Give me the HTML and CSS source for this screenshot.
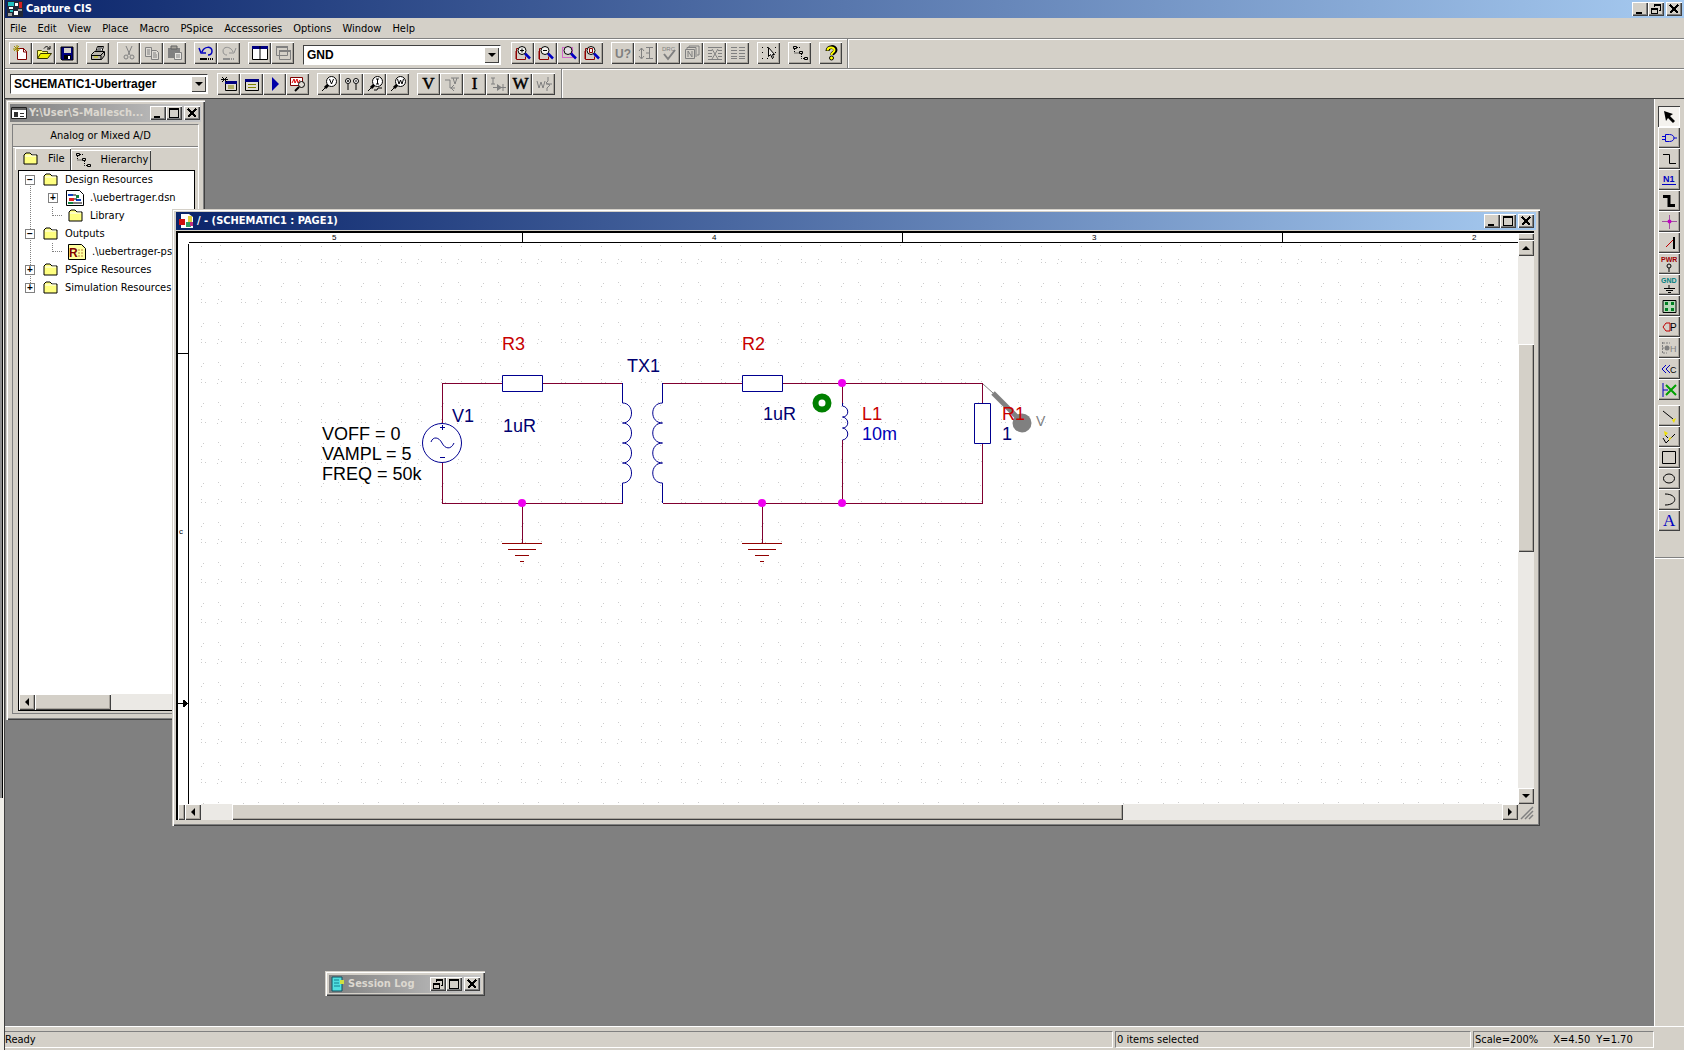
FILE: index.html
```html
<!DOCTYPE html>
<html lang="en">
<head>
<meta charset="utf-8">
<title>Capture CIS</title>
<link rel="stylesheet" href="styles.css">
</head>
<body>
<svg class="defs" aria-hidden="true">
  <symbol id="min" viewBox="0 0 12 10"><path d="M2 8h6v2H2z"/></symbol>
  <symbol id="max" viewBox="0 0 12 10"><path d="M1 0h10v10H1zM2 2v7h8V2z" fill-rule="evenodd"/></symbol>
  <symbol id="restore" viewBox="0 0 12 10"><path d="M4 0h7v7H9V6h1V2H5v1H4zM1 4h7v6H1zM2 6v3h5V6z" fill-rule="evenodd"/></symbol>
  <symbol id="close" viewBox="0 0 12 10"><path d="M2 1l8 8M10 1L2 9" stroke="#000" stroke-width="2" fill="none"/></symbol>
  <symbol id="folder" viewBox="0 0 16 14"><path d="M1 12V3l2-2h4l2 2h5v9z" fill="#ffff80" stroke="#000"/><path d="M2 4h11" stroke="#fff"/></symbol>
  <symbol id="hier" viewBox="0 0 16 16"><path d="M1.500 1.500h3v2h-3zM7.500 6.500h3v2h-3zM12.500 12.500h3v2h-3z" fill="none" stroke="#000"/><path d="M2.500 4v4H7M9.500 9v4.500H12M5 2.500h3" fill="none" stroke="#000" stroke-dasharray="1 1"/></symbol>
  <symbol id="zoompage" viewBox="0 0 16 16"><path d="M4.500 3.500h-3v11h9v-3" fill="none" stroke="#900000"/><path d="M1 6v8" stroke="#900000"/><circle cx="7" cy="5.500" r="4" fill="#f4f4f0" stroke="#000"/><path d="M10 8.500l5 5" stroke="#0000c0" stroke-width="2.500"/></symbol>
  <symbol id="probe" viewBox="0 0 16 16"><circle cx="10.500" cy="5.500" r="5" fill="#fff" stroke="#000"/><path d="M7 9l-3 3" stroke="#000" stroke-width="3"/><path d="M4 12l-3 3" stroke="#000"/></symbol>
</svg>

<div class="app">
  <aside class="edge"><i></i></aside>
  <div class="main">
    <header class="titlebar app-title">
      <svg class="ico" viewBox="0 0 16 16"><path d="M0 0h16v16H0z" fill="#202838"/><path d="M1 1h6v4H1zM3 9h3v2H3z" fill="#20c0c0"/><path d="M8 2h3v3H8zM2 6h4v2H2zM7 10h4v4H7z" fill="#fff"/><path d="M12 1h3v6h-3z" fill="#d02020"/><path d="M1 12h4v3H1zM11 8h4v2h-4z" fill="#a0a0a0"/></svg>
      <h1>Capture CIS</h1>
      <span class="winbtns"><button aria-label="Minimize"><svg><use href="#min"/></svg></button><button aria-label="Restore"><svg><use href="#restore"/></svg></button><button class="x" aria-label="Close"><svg><use href="#close"/></svg></button></span>
    </header>
    <nav class="menu"><button>File</button><button>Edit</button><button>View</button><button>Place</button><button>Macro</button><button>PSpice</button><button>Accessories</button><button>Options</button><button>Window</button><button>Help</button></nav>

    <div class="toolbar first">
      <div class="band">
        <div class="group">
          <button aria-label="New"><svg viewBox="0 0 16 16"><path d="M4.500 3.500h6l3 3v8h-9z" fill="#fff" stroke="#800000"/><path d="M10.500 3v4H14" fill="none" stroke="#800000"/><path d="M1 1l5 5M6 1L1 6M0 4h7M4 0v7" stroke="#a09000"/></svg></button>
          <button aria-label="Open"><svg viewBox="0 0 16 16"><path d="M1.500 13V5.500h4l1 1h5V9" fill="#ffff60" stroke="#505000"/><path d="M1.500 13.500l3-5h11l-4 5z" fill="#f0f000" stroke="#303000"/><path d="M8 3.500c2-3 4-2 5 0M14 1v3h-3" fill="none" stroke="#000"/></svg></button>
          <button aria-label="Save"><svg viewBox="0 0 16 16"><path d="M2 2h12v13H3l-1-1z" fill="#000080" stroke="#000"/><path d="M5 3h7v5H5z" fill="#d4d0c8"/><path d="M5 10h7v4H5z" fill="#000"/><path d="M9 11h2v3H9z" fill="#fff"/></svg></button>
        </div>
        <div class="group">
          <button aria-label="Print"><svg viewBox="0 0 16 16"><path d="M5.500 7.500l2-6h6l-2 6z" fill="#fff" stroke="#000"/><path d="M8 3h4M7 5h4" stroke="#000"/><path d="M1.500 9.500l3-3h10v4l-3 4h-10z" fill="#b8b4ac" stroke="#000"/><path d="M2 10.500h9v4M11 10l3-3" fill="none" stroke="#000"/><path d="M4 12h4" stroke="#d0d000"/></svg></button>
        </div>
        <div class="group">
          <button aria-label="Cut" disabled><svg viewBox="0 0 16 16"><path d="M5 1l4 9M11 1L7 10" stroke="#808080" fill="none"/><circle cx="5" cy="12" r="2" fill="none" stroke="#808080"/><circle cx="11" cy="12" r="2" fill="none" stroke="#808080"/></svg></button>
          <button aria-label="Copy" disabled><svg viewBox="0 0 16 16"><path d="M1.500 2.500h6v9h-6zM7.500 5.500h5l2 2v7h-7z" fill="#dedbd5" stroke="#808080"/><path d="M3 5h3M3 7h3M3 9h3M9 8h3M9 10h4M9 12h4" stroke="#808080"/></svg></button>
          <button aria-label="Paste" disabled><svg viewBox="0 0 16 16"><path d="M1 3h12v10H1z" fill="#808080"/><path d="M4 1h6v3H4z" fill="#a8a49c" stroke="#606060"/><path d="M7.500 7.500h7v7h-7z" fill="#e8e6e2" stroke="#808080"/><path d="M9 10h4M9 12h4" stroke="#808080"/></svg></button>
        </div>
        <div class="group">
          <button aria-label="Undo"><svg viewBox="0 0 16 16"><path d="M4 7C6 1 14 1 14 6c0 3-2 4-4 4M1 3l2 5h5" fill="none" stroke="#0000c0" stroke-width="1.500"/><path d="M2 13h7v2H2zM10 13h1v2h-1zM12 13h1v2h-1zM14 13h1v2h-1z"/></svg></button>
          <button aria-label="Redo" disabled><svg viewBox="0 0 16 16"><path d="M12 7C10 1 2 1 2 6c0 3 2 4 4 4M15 3l-2 5H8" fill="none" stroke="#909090"/><path d="M2 13h7v2H2zM10 13h1v2h-1zM12 13h1v2h-1z" fill="#909090"/></svg></button>
        </div>
        <div class="group">
          <button aria-label="Tile"><svg viewBox="0 0 16 16"><path d="M.5 1.500h15v13H.5z" fill="#fff" stroke="#000"/><path d="M0 1h16v3H0z" fill="#000080"/><path d="M8 1v14" stroke="#000"/></svg></button>
          <button aria-label="Cascade" disabled><svg viewBox="0 0 16 16"><path d="M1.500 1.500h11v9h-11zM4.500 5.500h11v9h-11z" fill="#d4d0c8" stroke="#808080"/><path d="M1 1h12v2H1zM4 5h12v2H4z" fill="#808080"/></svg></button>
        </div>
        <label class="combo part"><select aria-label="Part"><option>GND</option></select><span></span></label>
        <div class="group">
          <button aria-label="Zoom in"><svg viewBox="0 0 16 16"><use href="#zoompage"/><path d="M5 5.500h4M7 3.500v4" stroke="#000"/></svg></button>
          <button aria-label="Zoom out"><svg viewBox="0 0 16 16"><use href="#zoompage"/><path d="M5 5.500h4" stroke="#000"/></svg></button>
          <button aria-label="Zoom area"><svg viewBox="0 0 16 16"><path d="M1.500 2.500h10v10h-10z" fill="none" stroke="#d000d0" stroke-dasharray="1 1"/><circle cx="7" cy="5.500" r="4" fill="#e4e0e4" stroke="#000"/><path d="M10 8.500l5 5" stroke="#0000c0" stroke-width="2.500"/></svg></button>
          <button aria-label="Zoom all"><svg viewBox="0 0 16 16"><use href="#zoompage"/><path d="M5.500 3.500h3v4h-3z" fill="none" stroke="#900000"/></svg></button>
        </div>
        <div class="group">
          <button aria-label="Annotate" disabled><svg viewBox="0 0 16 16"><text x="0" y="13" class="t-sans" font-size="12" font-weight="700" fill="#808080">U?</text></svg></button>
          <button aria-label="Back annotate" disabled><svg viewBox="0 0 16 16"><path d="M3.500 3v10M1 6l2.500-3L6 6M1 11l2.500 3L6 11M8 2.500h7M8 13.500h7M11.500 3v10M8 8h4" fill="none" stroke="#808080"/></svg></button>
          <button aria-label="Design rules check" disabled><svg viewBox="0 0 16 16"><text x="1" y="6" class="t-sans" font-size="6" fill="#808080">DRC</text><path d="M3 9l4 5 7-9" fill="none" stroke="#808080" stroke-width="2"/></svg></button>
          <button aria-label="Netlist" disabled><svg viewBox="0 0 16 16"><path d="M1.500 4.500h9v9h-9zM3 4V2.500h9V12M5 2V1h10v9h-2" fill="none" stroke="#808080"/><path d="M4 12V6l4 6V6" fill="none" stroke="#808080"/></svg></button>
          <button aria-label="Cross reference" disabled><svg viewBox="0 0 16 16"><path d="M1 2.500h14M1 5.500h4M11 5.500h4M1 8.500h4M11 8.500h4M1 11.500h4M11 11.500h4M1 14.500h14" stroke="#808080"/><path d="M5 4l6 10M11 4L5 14" stroke="#808080"/></svg></button>
          <button aria-label="Bill of materials" disabled><svg viewBox="0 0 16 16"><path d="M1 2.500h6M9 2.500h6M1 5.500h6M9 5.500h6M1 8.500h6M9 8.500h6M1 11.500h6M9 11.500h6M1 13.500h6M9 13.500h6" stroke="#808080"/></svg></button>
        </div>
        <div class="group">
          <button aria-label="Snap to grid"><svg viewBox="0 0 16 16"><path d="M1 2h1v1H1zM1 7h1v1H1zM1 13h1v1H1zM6 13h1v1H6zM11 13h1v1h-1zM14 2h1v1h-1zM14 7h1v1h-1zM6 2h1v1H6z"/><path d="M7.500 2.500v9l2-2 2 4 1-1-1-3h2z" fill="#e8e6e2" stroke="#000"/></svg></button>
        </div>
        <div class="group">
          <button aria-label="Project manager"><svg viewBox="0 0 16 16"><use href="#hier"/></svg></button>
        </div>
        <div class="group">
          <button aria-label="Help"><svg viewBox="0 0 16 16"><path d="M4.500 6c0-5 8-5 8-1 0 3-3 2-3.500 5" fill="none" stroke="#000" stroke-width="4"/><path d="M4.500 5.500c0-4 7-4 7-.5 0 3-3 2-3 5" fill="none" stroke="#ffff00" stroke-width="2"/><circle cx="8.500" cy="13" r="2" fill="#ffff00" stroke="#000"/></svg></button>
        </div>
      </div>
    </div>

    <div class="toolbar second">
      <div class="band">
        <label class="combo profile"><select aria-label="Simulation profile"><option>SCHEMATIC1-Ubertrager</option></select><span></span></label>
        <div class="group">
          <button aria-label="New simulation profile"><svg viewBox="0 0 16 16"><path d="M4.500 5.500h11v9h-11z" fill="#e0dcd4" stroke="#000"/><path d="M4 5h12v3H4z" fill="#000080"/><path d="M1 1l5 5M6 1L1 6M0 3.500h7" stroke="#000"/><path d="M7 10h6M7 12h6" stroke="#808000"/></svg></button>
          <button aria-label="Edit simulation profile"><svg viewBox="0 0 16 16"><path d="M1.500 3.500h13v11h-13z" fill="#e0dcd4" stroke="#000"/><path d="M1 3h14v3H1z" fill="#000080"/><path d="M4 8.500h8M4 11.500h8" stroke="#808000"/></svg></button>
          <button aria-label="Run PSpice"><svg viewBox="0 0 16 16"><path d="M5 1l7 7-7 7z" fill="#0000a8"/></svg></button>
          <button aria-label="View results"><svg viewBox="0 0 16 16"><path d="M.5 1.500h12v8H.5z" fill="#fff" stroke="#800000"/><path d="M2 7l2-4 1 4 2-4 1 4 2-3" fill="none" stroke="#e00000"/><circle cx="11.500" cy="8.500" r="3" fill="#e0dcd4" stroke="#000"/><path d="M9 11l-4 4" stroke="#000" stroke-width="2"/></svg></button>
        </div>
        <div class="group">
          <button aria-label="Voltage marker"><svg viewBox="0 0 16 16"><use href="#probe"/><path d="M8.500 3l2 5 2-5" fill="none" stroke="#000"/></svg></button>
          <button aria-label="Differential markers"><svg viewBox="0 0 16 16"><circle cx="4" cy="5" r="2.500" fill="#fff" stroke="#000"/><circle cx="12" cy="5" r="2.500" fill="#fff" stroke="#000"/><path d="M4 8v6M12 8v6M3 5h2M4 4v2M11 5h2" stroke="#000"/></svg></button>
          <button aria-label="Current marker"><svg viewBox="0 0 16 16"><use href="#probe"/><path d="M9 3h3M10.500 3v5M9 8h3M7 14h3l1-2h4" fill="none" stroke="#000"/></svg></button>
          <button aria-label="Power marker"><svg viewBox="0 0 16 16"><use href="#probe"/><path d="M7.500 3l1.500 5 1.500-4L12 8l1.500-5" fill="none" stroke="#000"/></svg></button>
        </div>
        <div class="group">
          <button class="letter">V</button>
          <button aria-label="Toggle voltage" disabled><svg viewBox="0 0 16 16"><path d="M1 4h5v8h5M10 9l-3 3 3 3M9 2l2 6 2-6M7 2h8" fill="none" stroke="#808080"/></svg></button>
          <button class="letter">I</button>
          <button aria-label="Toggle current" disabled><svg viewBox="0 0 16 16"><path d="M1 2h4M3 2v6M1 8h4M3 11.500h13M13 8v7" fill="none" stroke="#808080"/><path d="M7 8v7l5-3.500z" fill="#808080"/></svg></button>
          <button class="letter">W</button>
          <button aria-label="Toggle power" disabled><svg viewBox="0 0 16 16"><path d="M1 5l2 7 2-6 2 6 2-7M12 1v4l-2 2 4 2-3 3v3M10 8h6" fill="none" stroke="#808080"/></svg></button>
        </div>
      </div>
    </div>

    <div class="middle">
      <main class="desk">
        <section class="window project">
          <header class="titlebar inactive">
            <svg class="ico" viewBox="0 0 16 16"><path d="M.5 2.500h15v11H.5z" fill="#fff" stroke="#202020"/><path d="M1 3h14v2H1z" fill="#606060"/><path d="M3 7h4v5H3zM9 8h4v1H9zM9 11h4v1H9z" fill="#303030"/></svg>
            <h2>Y:\User\S-Mallesch...</h2>
            <span class="winbtns"><button aria-label="Minimize"><svg><use href="#min"/></svg></button><button aria-label="Maximize"><svg><use href="#max"/></svg></button><button class="x" aria-label="Close"><svg><use href="#close"/></svg></button></span>
          </header>
          <div class="project-body">
            <p class="kind">Analog or Mixed A/D</p>
            <div class="tabs"><button class="on"><svg class="fold"><use href="#folder"/></svg>File</button><button><svg class="ico"><use href="#hier"/></svg>Hierarchy</button></div>
            <div class="pane">
              <ul class="tree">
                <li><i class="pm">−</i><svg class="fold"><use href="#folder"/></svg>Design Resources</li>
                <li class="sub"><i class="pm plus">+</i><svg class="doc" viewBox="0 0 18 16"><path d="M.5.5h13l4 4v11H.5z" fill="#fff" stroke="#000"/><path d="M2 4h5v2H2zM10 9h5v2h-5z" fill="#1040c0"/><path d="M3 8h5v3H3z" fill="#e02020"/><path d="M10 5h3v3h-3zM2 12h5v2H2z" fill="#108040"/><path d="M7 5h3M8 9h3M7 13h9" stroke="#000"/></svg>.\uebertrager.dsn</li>
                <li class="sub"><i class="no"></i><svg class="fold"><use href="#folder"/></svg>Library</li>
                <li><i class="pm">−</i><svg class="fold"><use href="#folder"/></svg>Outputs</li>
                <li class="sub"><i class="no"></i><svg class="doc" viewBox="0 0 18 16"><path d="M.5.5h13l4 4v11H.5z" fill="#ffffa0" stroke="#000"/><text x="1" y="13" class="t-sans" font-weight="700" font-size="12" fill="#800000">R</text><path d="M10 6h5M10 9h5M10 12h5" stroke="#c08040" stroke-dasharray="2 1"/></svg>.\uebertrager-psp</li>
                <li><i class="pm">+</i><svg class="fold"><use href="#folder"/></svg>PSpice Resources</li>
                <li><i class="pm">+</i><svg class="fold"><use href="#folder"/></svg>Simulation Resources</li>
              </ul>
              <div class="hbar"><button class="arr l" aria-label="Scroll left"></button><span class="thumb"></span></div>
            </div>
          </div>
        </section>

        <section class="window schematic">
          <header class="titlebar">
            <svg class="ico" viewBox="0 0 16 16"><path d="M3 1h8l4 3v11H3z" fill="#fff"/><path d="M1 6h6v6H1z" fill="#d01010"/><path d="M10 3h4v6h-4z" fill="#e0d040"/><path d="M8 9h5v5H8z" fill="#30a060"/><path d="M12 9h3v4h-3z" fill="#c03080"/></svg>
            <h2>/ - (SCHEMATIC1 : PAGE1)</h2>
            <span class="winbtns"><button aria-label="Minimize"><svg><use href="#min"/></svg></button><button aria-label="Maximize"><svg><use href="#max"/></svg></button><button class="x" aria-label="Close"><svg><use href="#close"/></svg></button></span>
          </header>
          <div class="page">
            <svg class="drawing" role="img" aria-label="Transformer schematic">
              <defs><pattern id="grid" width="40" height="40" patternUnits="userSpaceOnUse" x="200" y="257">
                <path d="M1 2h1v1H1zM5 5h1v1H5zM1 5h1v1H1zM18 2h1v1h-1zM21 4h1v1h-1zM17 6h1v1h-1zM3 26h1v1H3zM1 29h1v1H1zM18 25h1v1h-1zM20 28h1v1h-1z" fill="#ccc"/></pattern></defs>
              <g transform="translate(-178 -233)">
                <rect x="190" y="244" width="1328" height="560" fill="url(#grid)"/>
                <g stroke="#000" fill="none" shape-rendering="crispEdges">
                  <path d="M189 242.500h1329M188.500 244v560M522.500 233v10M902.500 233v10M1282.500 233v10M178 353.500h10M178 703.500h6"/>
                  <path d="M183 700l5 3.500-5 3.500z" fill="#000"/>
                </g>
                <g class="ruler"><text x="332" y="240">5</text><text x="712" y="240">4</text><text x="1092" y="240">3</text><text x="1472" y="240">2</text><text x="179" y="534">c</text></g>
                <g class="wire">
                  <path d="M502 383.500h-59.500V423M542 383.500h80M442.500 463v40.500h180M742 383.500h-80M782 383.500h200.500V403M982.500 443v60.500h-320M842.500 383v20M842.500 440v63M522.500 503v40M762.500 503v40"/>
                </g>
                <g class="earth">
                  <path d="M502 543.500h40M508 549.500h28M515 555.500h14M520 561.500h4M742 543.500h40M748 549.500h28M755 555.500h14M760 561.500h4"/>
                </g>
                <g class="part">
                  <path d="M502.500 375.500h40v16h-40zM742.500 375.500h40v16h-40zM974.500 403.500h16v40h-16z" fill="#fff"/>
                  <path d="M622.500 383v20c12 0 12 20 0 20c12 0 12 20 0 20c12 0 12 20 0 20c12 0 12 20 0 20v20"/>
                  <path d="M662.500 383v20c-13 0-13 20 0 20c-13 0-13 20 0 20c-13 0-13 20 0 20c-13 0-13 20 0 20v20"/>
                  <path d="M842.500 403v3c7 1 7 11 0 11c7 1 7 11 0 11c7 1 7 11 0 12"/>
                  <circle cx="442" cy="443" r="19.500" fill="#fff"/>
                  <path d="M431 442c2-6 8-5 11 1s9 7 12 0M440 427.500h5M442.500 425v5M440 457.500h5"/>
                </g>
                <g fill="#f000f0"><circle cx="522" cy="503" r="4"/><circle cx="762" cy="503" r="4"/><circle cx="842" cy="503" r="4"/><circle cx="842" cy="383" r="4"/></g>
                <circle cx="822" cy="403" r="6.500" fill="#fff" stroke="#008000" stroke-width="6"/>
                <g class="lbl">
                  <text x="322" y="440">VOFF = 0</text><text x="322" y="460">VAMPL = 5</text><text x="322" y="480">FREQ = 50k</text>
                  <g class="navy"><text x="452" y="422">V1</text><text x="503" y="432">1uR</text><text x="627" y="372">TX1</text><text x="763" y="420">1uR</text><text x="1002" y="440">1</text></g>
                  <text x="862" y="440" class="blue">10m</text>
                  <g class="red"><text x="502" y="350">R3</text><text x="742" y="350">R2</text><text x="862" y="420">L1</text></g>
                </g>
                <g stroke="#808080" fill="none"><path d="M983 384l10 9"/><path d="M993 393l24 24" stroke-width="5"/></g>
                <circle cx="1022" cy="423" r="9.500" fill="#808080"/>
                <text x="1002" y="420" class="lbl red">R1</text>
                <text x="1036" y="426" class="lbl probe">V</text>
              </g>
            </svg>
            <div class="vbar"><i class="split"></i><button class="arr u" aria-label="Scroll up"></button><span class="thumb"></span><button class="arr d" aria-label="Scroll down"></button></div>
            <div class="hbar"><i class="split"></i><button class="arr l" aria-label="Scroll left"></button><span class="thumb"></span><button class="arr r" aria-label="Scroll right"></button></div>
            <svg class="grip" viewBox="0 0 16 16"><path d="M3 15L15 3M7 15l8-8M11 15l4-4" stroke="#808080" stroke-width="1.500"/></svg>
          </div>
        </section>

        <section class="window session">
          <header class="titlebar inactive">
            <svg class="ico" viewBox="0 0 16 16"><path d="M2 1h10v14H2z" fill="#50e0e0" stroke="#105060"/><path d="M4 4h5M4 7h5M4 10h6" stroke="#108090"/><path d="M10 4h4v4h-4z" fill="#d0e040"/></svg>
            <h2>Session Log</h2>
            <span class="winbtns"><button aria-label="Restore"><svg><use href="#restore"/></svg></button><button aria-label="Maximize"><svg><use href="#max"/></svg></button><button class="x" aria-label="Close"><svg><use href="#close"/></svg></button></span>
          </header>
        </section>
      </main>

      <aside class="palette">
        <div class="tools">
          <button class="on" aria-label="Select"><svg viewBox="0 0 16 16"><path d="M3 2l9 3-3 2 5 5-2 2-5-5-2 3z"/></svg></button>
          <button aria-label="Place part"><svg viewBox="0 0 16 16"><path d="M4.500 4.500h4c6 0 6 7 0 7h-4zM1 6.500h3M1 9.500h3M13 8h3" fill="none" stroke="#0000d0"/></svg></button>
          <button aria-label="Place wire"><svg viewBox="0 0 16 16"><path d="M2 3.500h6.500v9H15" fill="none" stroke="#000"/></svg></button>
          <button aria-label="Place net alias"><svg viewBox="0 0 16 16"><text x="2" y="10" class="t-sans" font-weight="700" font-size="9" fill="#0000c0">N1</text><path d="M1 12.500h14" stroke="#0000c0"/></svg></button>
          <button aria-label="Place bus"><svg viewBox="0 0 16 16"><path d="M2 3.500h6v9h6" fill="none" stroke="#000" stroke-width="3"/></svg></button>
          <button aria-label="Place junction"><svg viewBox="0 0 16 16"><path d="M8.500 1v14M1 7.500h15" stroke="#a050a0"/><circle cx="8.500" cy="7.500" r="2" fill="#c000c0"/></svg></button>
          <button aria-label="Place bus entry"><svg viewBox="0 0 16 16"><path d="M13 2v12" stroke="#000" stroke-width="2"/><path d="M5 12l7-7" stroke="#c00000"/></svg></button>
          <button aria-label="Place power"><svg viewBox="0 0 16 16"><text x="0" y="6" class="t-mono" fill="#a00000">PWR</text><circle cx="8" cy="10" r="2" fill="none" stroke="#000"/><path d="M8 12v4" stroke="#000"/></svg></button>
          <button aria-label="Place ground"><svg viewBox="0 0 16 16"><text x="0" y="6" class="t-mono" fill="#008080">GND</text><path d="M8 8v3M3 11.500h11M5 13.500h7M7 15.500h3" stroke="#000"/></svg></button>
          <button aria-label="Place hierarchical block"><svg viewBox="0 0 16 16"><path d="M2 2.500h13v12H2z" fill="#b8d8b8" stroke="#000"/><path d="M4 4h3v3H4zM10 4h3v3h-3zM4 10h3v3H4zM10 10h3v3h-3z" fill="#008020"/></svg></button>
          <button aria-label="Place port"><svg viewBox="0 0 16 16"><path d="M2 8l3-4h4v8H5z" fill="none" stroke="#c00000"/><text x="9" y="12" class="t-sans" font-size="10">P</text></svg></button>
          <button aria-label="Place pin" disabled><svg viewBox="0 0 16 16"><path d="M1.500 2v12M2 3h7M2 13h4M1 8h3" stroke="#808080" stroke-dasharray="2 1"/><circle cx="6" cy="8" r="2.500" fill="#808080"/><text x="9" y="12" class="t-sans" font-size="9" fill="#808080">H</text></svg></button>
          <button aria-label="Place off-page connector"><svg viewBox="0 0 16 16"><path d="M5 4L1 8l4 4M9 4L5 8l4 4" fill="none" stroke="#0000c0"/><text x="9" y="12" class="t-sans" font-size="9">C</text></svg></button>
          <button aria-label="Place no connect"><svg viewBox="0 0 16 16"><path d="M2 1v14M2 8h5" stroke="#0000c0"/><path d="M5 3l10 10M15 3L5 13" stroke="#00a000" stroke-width="2"/></svg></button>
        </div>
        <div class="tools">
          <button aria-label="Place line"><svg viewBox="0 0 16 16"><path d="M2 3l10 8" stroke="#000"/><path d="M11 12l4-2-2 5z" fill="#f0e000"/></svg></button>
          <button aria-label="Place polyline"><svg viewBox="0 0 16 16"><path d="M2 9l3 5 9-9M4 6l3 3" fill="none" stroke="#000"/><path d="M3 2l4 2-3 3zM8 9l3-1-3 4z" fill="#f0e000"/></svg></button>
          <button aria-label="Place rectangle"><svg viewBox="0 0 16 16"><path d="M1.500 1.500h13v12h-13z" fill="none" stroke="#000"/></svg></button>
          <button aria-label="Place ellipse"><svg viewBox="0 0 16 16"><ellipse cx="8" cy="7.500" rx="5.500" ry="4.500" fill="none" stroke="#000"/></svg></button>
          <button aria-label="Place arc"><svg viewBox="0 0 16 16"><path d="M4 2c13 0 13 11 0 11" fill="none" stroke="#000"/></svg></button>
          <button aria-label="Place text"><svg viewBox="0 0 16 16"><text x="2" y="13" class="t-serif" fill="#0000c0">A</text></svg></button>
        </div>
      </aside>
    </div>

    <footer class="status"><span class="s1">Ready</span><span class="s2">0 items selected</span><span class="s3"><b>Scale=200%</b><b>X=4.50</b><b>Y=1.70</b></span></footer>
  </div>
</div>
</body>
</html>
```
FILE: styles.css
```css
* { box-sizing: border-box; }
:root {
  --face: #d4d0c8;
  --dark: #808080;
  --ui: "DejaVu Sans Condensed", "Liberation Sans", sans-serif;
  --arial: "Liberation Sans", Arial, sans-serif;
}
body { margin: 0; background: var(--face); font: 11px/14px var(--ui); color: #000; }
button { font: inherit; color: inherit; margin: 0; padding: 0; border: 0; background: var(--face); }
h1, h2, p, ul { margin: 0; padding: 0; font-size: 11px; line-height: 14px; }
.defs { position: absolute; width: 0; height: 0; }
.ico { width: 16px; height: 16px; flex: none; }
.t-sans { font-family: var(--arial); }
.t-mono { font: 700 7px var(--arial); }
.t-serif { font: 17px "Liberation Serif", serif; }

.app { display: flex; height: 100vh; }
.edge { width: 5px; background: #f0eee8; border-right: 1px solid #404040; flex: none; }
.edge i { display: block; height: 76%; width: 3px; background: #909090; border-right: 1px solid #000; }
.main { flex: 1; min-width: 0; display: flex; flex-direction: column; }

/* Title bars */
.titlebar { display: flex; align-items: center; gap: 3px; height: 18px; flex: none; padding: 0 2px; color: #fff; background: linear-gradient(90deg, #0a246a, #a6caf0); }
.titlebar h1, .titlebar h2 { flex: 1; min-width: 0; white-space: nowrap; }
.titlebar.inactive { background: linear-gradient(90deg, #808080, #c8c8c8); color: #dcd8d0; gap: 2px; padding: 0 1px; }
.winbtns { display: flex; }
.winbtns button { width: 16px; height: 14px; display: grid; place-items: center; box-shadow: inset 1px 1px #fff, inset -1px -1px #404040, inset -2px -2px var(--dark); }
.winbtns svg { width: 12px; height: 10px; shape-rendering: crispEdges; }
.winbtns .x { margin-left: 2px; }

/* Menu and toolbars */
.menu { display: flex; gap: 1px; height: 20px; padding-top: 1px; flex: none; }
.menu button { padding: 0 5px; }
.toolbar { display: flex; height: 30px; flex: none; border-top: 1px solid var(--dark); box-shadow: inset 0 1px #fff; }
.second { border-bottom: 1px solid #404040; height: 31px; }
.band { display: flex; align-items: center; gap: 8px; padding: 1px 6px 0 5px; border-right: 1px solid var(--dark); box-shadow: 1px 0 #fff; }
.first .band { padding: 0 5px 1px 4px; }
.group { display: flex; }
.group button, .tools button { width: 23px; height: 22px; display: grid; place-items: center; box-shadow: inset 1px 1px #fff, inset -1px -1px #404040, inset -2px -2px #a8a49c; }
.group svg, .tools svg { width: 16px; height: 16px; }
.group .letter { font: 17px/20px "Liberation Serif", serif; -webkit-text-stroke: 0.5px #000; }
.combo { position: relative; display: flex; height: 20px; margin: 0 1px; }
.part.combo { margin: 4px 2px 0 1px; }
.part { width: 198px; }
.profile { width: 198px; margin-left: 0; }
.combo select { appearance: none; width: 100%; border: 1px solid var(--dark); border-color: #404040 #fff #fff #404040; border-radius: 0; background: #fff; padding: 0 20px 0 3px; font: 700 12px/16px var(--arial); color: #000; }
.combo span { position: absolute; right: 2px; top: 2px; width: 15px; height: 16px; background: var(--face); box-shadow: inset 1px 1px #fff, inset -1px -1px #404040; pointer-events: none; display: grid; place-items: center; }
.combo span::after { content: ""; border: 4px solid transparent; border-top-color: #000; border-bottom: 0; }

/* Desktop */
.middle { flex: 1; min-height: 0; display: flex; }
.desk { flex: 1; position: relative; background: #808080; overflow: hidden; }
.window { position: absolute; display: flex; flex-direction: column; background: var(--face); box-shadow: inset 1px 1px var(--face), inset 2px 2px #fff, inset -1px -1px #404040, inset -2px -2px var(--dark); padding: 4px; }
.project { left: 1px; top: 1px; width: 199px; height: 620px; }
.schematic { left: 167px; top: 110px; width: 1368px; height: 617px; padding-top: 3px; }
.session { left: 320px; top: 872px; width: 160px; height: 25px; }

.project-body { flex: 1; display: flex; flex-direction: column; margin: 2px 2px 2px 2px; border: 1px solid var(--dark); border-right-color: #fff; min-height: 0; }
.kind { height: 22px; line-height: 21px; text-align: center; padding-right: 10px; border-bottom: 1px solid var(--dark); }
.tabs { display: flex; align-items: flex-end; height: 23px; padding: 1px 2px 0; box-shadow: inset 0 1px #fff; }
.tabs button { display: flex; align-items: center; height: 20px; padding: 0 3px 0 4px; gap: 9px; box-shadow: inset 1px 1px #fff, inset -1px 0 #404040; }
.tabs .on { height: 22px; padding: 0 7px 0 8px; }
.fold { width: 16px; height: 14px; flex: none; }
.pane { flex: 1; min-height: 0; display: flex; flex-direction: column; margin: 0 3px 2px 5px; background: #fff; border: 1px solid #000; }
.tree { flex: 1; list-style: none; padding-left: 6px; position: relative; }
.tree::before { content: ""; position: absolute; left: 11px; top: 10px; height: 108px; border-left: 1px dotted var(--dark); }
.tree li { height: 18px; display: flex; align-items: center; white-space: nowrap; gap: 6px; position: relative; }
.tree .sub { padding-left: 23px; }
.pm, .no { width: 10px; height: 10px; flex: none; margin-right: 2px; position: relative; }
.pm { z-index: 1; border: 1px solid var(--dark); background: #fff; font: 700 10px/8px var(--arial); text-align: center; }
.no { border: 1px dotted var(--dark); border-width: 0 0 1px 1px; height: 9px; margin: -9px 0 0 4px; }
.doc { width: 18px; height: 16px; flex: none; }

/* Scroll bars */
.hbar, .vbar { display: flex; background: #ebe9e5; flex: none; }
.hbar { height: 16px; }
.vbar { flex-direction: column; }
.arr, .thumb, .split { background: var(--face); box-shadow: inset 1px 1px #fff, inset -1px -1px #404040, inset -2px -2px #a8a49c; }
.arr { width: 16px; height: 16px; display: grid; place-items: center; flex: none; }
.arr::after { content: ""; border: 4px solid transparent; }
.l::after { border-right-color: #000; border-left: 0; }
.r::after { border-left-color: #000; border-right: 0; }
.u::after { border-bottom-color: #000; border-top: 0; }
.d::after { border-top-color: #000; border-bottom: 0; }
.project .thumb { width: 76px; }

/* Schematic page */
.page { flex: 1; min-height: 0; margin: 1px 2px 2px 0; display: grid; grid-template: 1fr 16px / 1fr 16px; border: 2px solid #000; border-width: 2px 0 0 2px; background: var(--face); }
.drawing { width: 100%; height: 100%; background: #fff; display: block; min-height: 0; }
.vbar .split { height: 7px; }
.vbar .thumb { height: 208px; margin: 88px 0 auto; }
.page .hbar .split { width: 7px; }
.page .hbar .thumb { margin: 0 auto 0 31px; min-width: 0; flex: 0 1 891px; }
.grip { width: 16px; height: 16px; }
.wire { stroke: #800030; fill: none; shape-rendering: crispEdges; }
.earth { stroke: #900000; fill: none; shape-rendering: crispEdges; }
.drawing .part { stroke: #000090; fill: none; }
.lbl { font: 18px var(--arial); }
.navy { fill: #000070; }
.blue { fill: #0000b8; }
.red { fill: #c80000; }
.probe { font-size: 14px; fill: #808080; }
.ruler { font: 8px var(--arial); }

/* Right palette */
.palette { width: 30px; flex: none; background: var(--face); border-left: 1px solid #fff; padding: 7px 4px 0 3px; display: flex; flex-direction: column; gap: 5px; }
.tools { display: flex; flex-direction: column; }
.tools button { width: 22px; height: 21px; }
.tools .on { background: #f4f2ee; box-shadow: inset 1px 1px #404040, inset -1px -1px #fff; }
.tools + .tools { border-bottom: 1px solid var(--dark); box-shadow: 0 1px #fff; padding-bottom: 26px; margin: 0 -4px 0 -3px; padding-left: 3px; }

/* Status bar */
.status { display: flex; gap: 2px; height: 24px; flex: none; padding: 4px 30px 2px 0; border-top: 1px solid #fff; }
.status span { border: 1px solid; border-color: var(--dark) #fff #fff var(--dark); line-height: 16px; white-space: nowrap; }
.status .s1 { flex: 1; border-left: 0; }
.s2 { width: 356px; padding-left: 1px; }
.s3 { width: 181px; padding-left: 1px; display: flex; }
.s3 b { font-weight: 400; margin-right: 6px; }
.s3 b:first-child { margin-right: 15px; }
```
